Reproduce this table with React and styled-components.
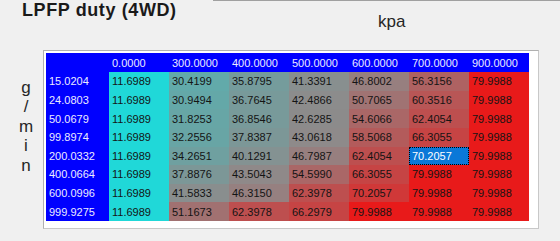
import React from "react";
import styled, { createGlobalStyle } from "styled-components";

const Global = createGlobalStyle`
  html, body { margin: 0; padding: 0; }
  body {
    background: #f0f0f0;
    font-family: "Liberation Sans", Arial, sans-serif;
    width: 560px;
    height: 241px;
    overflow: hidden;
  }
`;

const Page = styled.div`
  width: 560px;
  height: 241px;
  display: flex;
  flex-direction: column;
  background: #f0f0f0;
`;

const Header = styled.div`
  display: flex;
  height: 50px;
`;

const Title = styled.div`
  width: 191px;
  padding-left: 22px;
  font-size: 18px;
  line-height: 20px;
  font-weight: bold;
  letter-spacing: 0.6px;
  color: #1a1a1a;
  white-space: nowrap;
`;

const AxisTop = styled.div`
  flex: 1;
  border-top: 1px solid #a0a0a0;
  padding-top: 11px;
  padding-left: 165px;
  font-size: 17px;
  line-height: 20px;
  color: #262626;
`;

const Body = styled.div`
  display: flex;
`;

const SideAxis = styled.div`
  width: 34px;
  padding-left: 9px;
  padding-top: 27.6px;
  display: flex;
  flex-direction: column;
  align-items: center;
  font-size: 17px;
  line-height: 19.5px;
  color: #262626;
`;

const TableBox = styled.div`
  background: #ffffff;
  border: 1px solid #b0b0b0;
  border-right-color: #c8c8c8;
  border-bottom-color: #c8c8c8;
  padding: 2px 9px 7px 2px;
`;

const Grid = styled.div`
  display: grid;
  grid-template-columns: 63px repeat(7, 60px);
  grid-template-rows: 19px repeat(8, 18.625px);
  font-size: 11px;
`;

const Cell = styled.div`
  display: flex;
  align-items: center;
  padding-left: 3px;
  white-space: nowrap;
  overflow: hidden;
  box-sizing: border-box;
  background: ${(p) => p.$bg};
  color: #141414;
`;

const HeadCell = styled(Cell)`
  background: #0000ff;
  color: #ecebff;
`;

const SelCell = styled(Cell)`
  background: #0a78d8;
  color: #ffffff;
  outline: 1px dotted #000;
  outline-offset: -1px;
`;

const cols = ["0.0000", "300.0000", "400.0000", "500.0000", "600.0000", "700.0000", "900.0000"];
const rows = [
  ["15.0204", [11.6989, 30.4199, 35.8795, 41.3391, 46.8002, 56.3156, 79.9988]],
  ["24.0803", [11.6989, 30.9494, 36.7645, 42.4866, 50.7065, 60.3516, 79.9988]],
  ["50.0679", [11.6989, 31.8253, 36.8546, 42.6285, 54.6066, 62.4054, 79.9988]],
  ["99.8974", [11.6989, 32.2556, 37.8387, 43.0618, 58.5068, 66.3055, 79.9988]],
  ["200.0332", [11.6989, 34.2651, 40.1291, 46.7987, 62.4054, 70.2057, 79.9988]],
  ["400.0664", [11.6989, 37.8876, 43.5043, 54.599, 66.3055, 79.9988, 79.9988]],
  ["600.0996", [11.6989, 41.5833, 46.315, 62.3978, 70.2057, 79.9988, 79.9988]],
  ["999.9275", [11.6989, 51.1673, 62.3978, 66.2979, 79.9988, 79.9988, 79.9988]],
];

const MIN = 11.6989;
const MAX = 79.9988;
const CYAN = [32, 216, 216];
const GRAY = [140, 140, 140];
const RED = [232, 26, 26];
const MID = 0.45;

function mix(a, b, s) {
  return a.map((v, i) => Math.round(v + (b[i] - v) * s));
}

function colorFor(v) {
  const t = (v - MIN) / (MAX - MIN);
  const c = t <= MID ? mix(CYAN, GRAY, t / MID) : mix(GRAY, RED, (t - MID) / (1 - MID));
  return `rgb(${c[0]}, ${c[1]}, ${c[2]})`;
}

export default function App() {
  return (
    <Page>
      <Global />
      <Header>
        <Title>LPFP duty (4WD)</Title>
        <AxisTop>kpa</AxisTop>
      </Header>
      <Body>
        <SideAxis>
          <span>g</span>
          <span>/</span>
          <span>m</span>
          <span>i</span>
          <span>n</span>
        </SideAxis>
        <TableBox>
          <Grid>
            <HeadCell />
            {cols.map((c) => (
              <HeadCell key={c}>{c}</HeadCell>
            ))}
            {rows.map(([label, vals], ri) => (
              <React.Fragment key={label}>
                <HeadCell>{label}</HeadCell>
                {vals.map((v, ci) =>
                  ri === 4 && ci === 5 ? (
                    <SelCell key={ci}>{v.toFixed(4)}</SelCell>
                  ) : (
                    <Cell key={ci} $bg={colorFor(v)}>
                      {v.toFixed(4)}
                    </Cell>
                  )
                )}
              </React.Fragment>
            ))}
          </Grid>
        </TableBox>
      </Body>
    </Page>
  );
}
